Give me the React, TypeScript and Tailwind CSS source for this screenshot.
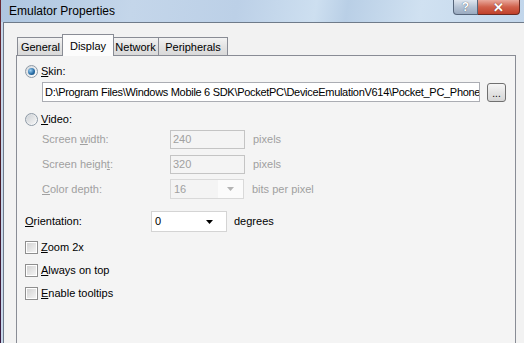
const Radio = ({ checked }: { checked?: boolean }) => (
  <span className="flex h-[13px] w-[13px] items-center justify-center rounded-full border border-[#8e9aa6] bg-[linear-gradient(135deg,#d4d8dc,#ffffff)]">
    {checked ? (
      <span className="h-[7px] w-[7px] rounded-full bg-[radial-gradient(circle_at_35%_35%,#9fd0f2,#2a6fa8_55%,#0f3d66)]" />
    ) : (
      <span className="h-[9px] w-[9px] rounded-full bg-[linear-gradient(135deg,#cfd3d7,#f4f4f4)]" />
    )}
  </span>
);

const Check = () => (
  <span className="flex h-[13px] w-[13px] items-center justify-center border border-[#8f8f8f] bg-white">
    <span className="h-[9px] w-[9px] bg-[linear-gradient(135deg,#d3d3d3,#f4f4f4)]" />
  </span>
);

const Arrow = ({ color }: { color: string }) => (
  <svg width="7" height="4" viewBox="0 0 7 4">
    <path d="M0 0h7L3.5 4z" fill={color} />
  </svg>
);

const Tab = ({ label, w, active }: { label: string; w: string; active?: boolean }) =>
  active ? (
    <div
      className={`${w} relative z-10 -mx-[2px] -mb-px flex h-[22px] items-start justify-center border border-b-0 border-[#898c95] bg-[#fcfcfc] pt-[3px]`}
    >
      {label}
    </div>
  ) : (
    <div
      className={`${w} flex h-[18px] items-center justify-center border border-b-0 border-[#898c95] bg-[linear-gradient(#f3f3f3,#e3e3e3_50%,#d9d9d9)] pt-px`}
    >
      {label}
    </div>
  );

const App = () => {
  return (
    <div className="flex h-[343px] w-[524px] overflow-hidden bg-[#f2f2f2] font-['Liberation_Sans',Arial,sans-serif] text-[11px] text-black">
      <div className="w-px bg-[linear-gradient(#6b2b36,#4a1d28_50%,#3b1a40)]" />
      <div className="flex flex-1 flex-col">
        {/* title bar */}
        <div className="flex h-[22px] items-start bg-[linear-gradient(100deg,#aec6e0_0%,#c4d6ea_25%,#bcd0e7_45%,#cddff0_60%,#b9cfe6_66%,#d0e1f1_80%,#c2d6eb_100%)] pl-[8px] pr-[4px]">
          <span className="mt-[3px] text-[12px] leading-[16px] text-black">Emulator Properties</span>
          <div className="ml-auto flex h-[15px]">
            <div className="flex w-[25px] items-center justify-center rounded-bl-[4px] border border-t-0 border-[#56657a] bg-[linear-gradient(#dfe6ef,#b5c3d4_50%,#9aaac0)] text-[12px] font-bold leading-none text-white [text-shadow:0_0_1px_#2c3a4e]">
              ?
            </div>
            <div className="flex w-[42px] items-center justify-center rounded-br-[4px] border border-l-0 border-t-0 border-[#6b2a22] bg-[linear-gradient(#e9a99c,#d0604b_50%,#c0402a)] text-[13px] font-bold leading-none text-white [text-shadow:0_0_1px_#5a1a10]">
              ✕
            </div>
          </div>
        </div>
        <div className="flex flex-1">
          <div className="w-[2px] bg-[#c6d7ea]" />
          <div className="flex flex-1 flex-col border-l border-t border-[#6f7b8a] bg-[#f2f2f2] pl-[12px] pr-[8px] pt-[11px]">
            {/* tabs */}
            <div className="flex items-end pl-px">
              <Tab label="General" w="w-[47px]" />
              <Tab label="Display" w="w-[52px]" active />
              <Tab label="Network" w="w-[47px]" />
              <Tab label="Peripherals" w="w-[70px] -ml-px" />
            </div>
            {/* panel */}
            <div className="flex flex-1 flex-col border border-b-0 border-[#898c95] bg-[#f4f4f4] pl-[8px] pt-[9px]">
              <div className="flex h-[13px] items-center gap-[3px]">
                <Radio checked />
                <span>
                  <u>S</u>kin:
                </span>
              </div>
              <div className="mt-[4px] flex items-center pl-[17px]">
                <div className="flex h-[20px] w-[438px] items-center overflow-hidden whitespace-nowrap border border-[#abadb3] bg-white pl-[2px] tracking-[-0.3px]">
                  <span className="shrink-0">
                    D:\Program Files\Windows Mobile 6 SDK\PocketPC\DeviceEmulationV614\Pocket_PC_Phone
                  </span>
                </div>
                <div className="ml-[7px] flex h-[19px] w-[19px] items-center justify-center rounded-[3px] border border-[#707070] bg-[linear-gradient(#f6f6f6,#e4e4e4_50%,#d6d6d6)] pt-[3px] text-[10px] leading-none">
                  ...
                </div>
              </div>
              <div className="mt-[11px] flex h-[13px] items-center gap-[3px]">
                <Radio />
                <span>
                  <u>V</u>ideo:
                </span>
              </div>
              <div className="mt-[4px] flex h-[19px] items-center pl-[17px] text-[#a0a0a0]">
                <span className="w-[128px]">
                  Screen <u>w</u>idth:
                </span>
                <div className="flex h-[19px] w-[75px] items-center border border-[#c4c4c4] bg-[#f4f4f4] pl-[2px]">240</div>
                <span className="ml-[8px]">pixels</span>
              </div>
              <div className="mt-[6px] flex h-[19px] items-center pl-[17px] text-[#a0a0a0]">
                <span className="w-[128px]">
                  Screen heigh<u>t</u>:
                </span>
                <div className="flex h-[19px] w-[75px] items-center border border-[#c4c4c4] bg-[#f4f4f4] pl-[2px]">320</div>
                <span className="ml-[8px]">pixels</span>
              </div>
              <div className="mt-[5px] flex h-[20px] items-center pl-[17px] text-[#a0a0a0]">
                <span className="w-[128px]">
                  <u>C</u>olor depth:
                </span>
                <div className="flex h-[20px] w-[74px] items-center border border-[#d9d9d9] bg-[#f4f4f4]">
                  <span className="flex-1 pl-[3px]">16</span>
                  <span className="flex h-full w-[25px] items-center justify-center bg-[#fbfbfb]">
                    <Arrow color="#b4b4b4" />
                  </span>
                </div>
                <span className="ml-[8px]">bits per pixel</span>
              </div>
              <div className="mt-[12px] flex h-[21px] items-center">
                <span className="w-[126px]">
                  <u>O</u>rientation:
                </span>
                <div className="flex h-[21px] w-[76px] items-center border border-[#d4d4d4] bg-white">
                  <span className="flex-1 pl-[3px]">0</span>
                  <span className="flex w-[20px] items-center justify-start">
                    <Arrow color="#000000" />
                  </span>
                </div>
                <span className="ml-[7px]">degrees</span>
              </div>
              <div className="mt-[9px] flex h-[13px] items-center gap-[3px]">
                <Check />
                <span>
                  <u>Z</u>oom 2x
                </span>
              </div>
              <div className="mt-[10px] flex h-[13px] items-center gap-[3px]">
                <Check />
                <span>
                  <u>A</u>lways on top
                </span>
              </div>
              <div className="mt-[10px] flex h-[13px] items-center gap-[3px]">
                <Check />
                <span>
                  <u>E</u>nable tooltips
                </span>
              </div>
            </div>
          </div>
        </div>
      </div>
    </div>
  );
};

export default App;
